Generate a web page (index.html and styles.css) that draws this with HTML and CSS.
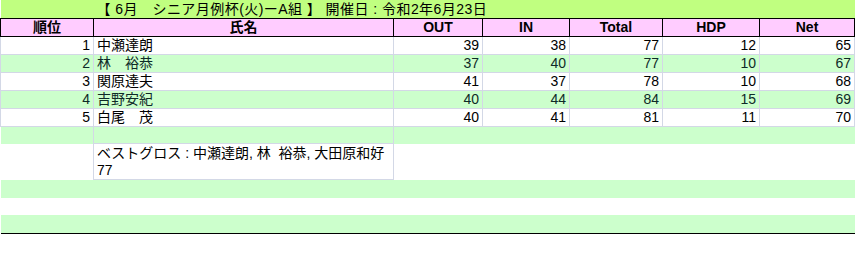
FILE: index.html
```html
<!DOCTYPE html>
<html lang="ja">
<head>
<meta charset="utf-8">
<link rel="stylesheet" href="styles.css">
</head>
<body>
<table class="sheet">
  <colgroup>
    <col class="c-rank"><col class="c-name"><col class="c-out"><col class="c-in"><col class="c-total"><col class="c-hdp"><col class="c-net">
  </colgroup>
  <tr class="title">
    <td></td>
    <td colspan="6">【 6月　シニア月例杯(火)ーA組 】 開催日 : 令和2年6月23日</td>
  </tr>
  <tr class="head">
    <th>順位</th><th>氏名</th><th>OUT</th><th>IN</th><th>Total</th><th>HDP</th><th>Net</th>
  </tr>
  <tr class="row">
    <td class="num">1</td><td class="name">中瀬達朗</td><td class="num">39</td><td class="num">38</td><td class="num">77</td><td class="num">12</td><td class="num">65</td>
  </tr>
  <tr class="row alt">
    <td class="num">2</td><td class="name">林　裕恭</td><td class="num">37</td><td class="num">40</td><td class="num">77</td><td class="num">10</td><td class="num">67</td>
  </tr>
  <tr class="row">
    <td class="num">3</td><td class="name">関原達夫</td><td class="num">41</td><td class="num">37</td><td class="num">78</td><td class="num">10</td><td class="num">68</td>
  </tr>
  <tr class="row alt">
    <td class="num">4</td><td class="name">吉野安紀</td><td class="num">40</td><td class="num">44</td><td class="num">84</td><td class="num">15</td><td class="num">69</td>
  </tr>
  <tr class="row">
    <td class="num">5</td><td class="name">白尾　茂</td><td class="num">40</td><td class="num">41</td><td class="num">81</td><td class="num">11</td><td class="num">70</td>
  </tr>
  <tr class="row alt blank">
    <td class="grid-r"></td><td class="grid-r grid-b"></td><td colspan="5"></td>
  </tr>
  <tr class="best">
    <td></td><td class="best-cell">ベストグロス : 中瀬達朗, 林&nbsp; 裕恭, 大田原和好<br>77</td><td colspan="5"></td>
  </tr>
  <tr class="plain alt"><td colspan="7"></td></tr>
  <tr class="plain"><td colspan="7"></td></tr>
  <tr class="plain alt last"><td colspan="7"></td></tr>
</table>
</body>
</html>
```

FILE: styles.css
```css
html, body {
  margin: 0;
  padding: 0;
  background: #ffffff;
}

.sheet {
  border-collapse: collapse;
  table-layout: fixed;
  width: 854px;
  font-family: "Liberation Sans", "Noto Sans CJK JP", sans-serif;
  font-size: 14px;
  color: #000000;
}

.c-rank { width: 93px; }
.c-name { width: 300px; }
.c-out { width: 89px; }
.c-in { width: 87px; }
.c-total { width: 93px; }
.c-hdp { width: 97px; }
.c-net { width: 95px; }

.sheet td, .sheet th {
  padding: 0 3px;
  height: 17px;
  line-height: 17px;
  white-space: nowrap;
  overflow: hidden;
  vertical-align: bottom;
}

.title td {
  background: #c0ff80;
  height: 18px;
  padding-left: 3px;
  font-size: 14px;
  letter-spacing: 0.45px;
}

.head th {
  background: #ffccff;
  border: 1px solid #000000;
  font-weight: bold;
  text-align: center;
  font-size: 14px;
}

.row td {
  border: 1px solid #d3d8e6;
}

.row .num { text-align: right; }
.row .name { text-align: left; }

.alt td {
  background: #ccffcc;
  color: #0e2a28;
}

.blank td {
  height: 16px;
  border: none;
  border-top: 1px solid #d3d8e6;
}
.blank td.grid-r { border-right: 1px solid #d3d8e6; }
.blank td.grid-b { border-bottom: 1px solid #d3d8e6; }

.best td {
  height: 35px;
  line-height: 17px;
  vertical-align: top;
  padding-top: 0;
}
.best .best-cell {
  border: 1px solid #d3d8e6;
  white-space: normal;
  padding-top: 1px;
  height: 34px;
}

.plain td {
  height: 17px;
}
.plain.alt td { height: 18px; }

.last td {
  border-bottom: 1px solid #000000;
}
```
